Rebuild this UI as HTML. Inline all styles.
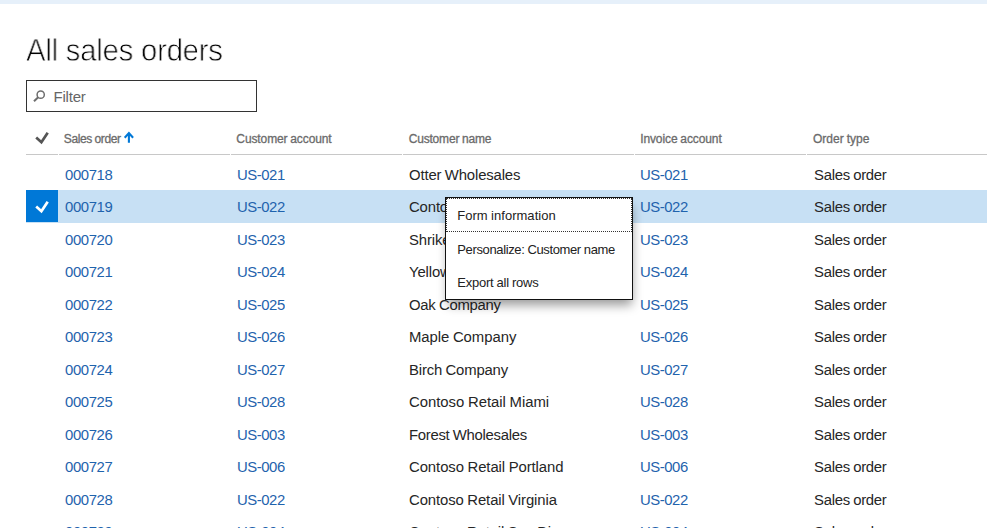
<!DOCTYPE html>
<html lang="en">
<head>
<meta charset="utf-8">
<title>All sales orders</title>
<style>
html,body{margin:0;padding:0;}
body{width:987px;height:528px;overflow:hidden;background:#fff;position:relative;
 font-family:"Liberation Sans",sans-serif;color:#222;}
span{position:absolute;white-space:nowrap;}
.topbar{position:absolute;left:0;top:0;width:987px;height:4px;background:#e6f0fa;}
.title{top:32px;will-change:transform;font-size:31px;line-height:38px;color:#000;transform:scaleX(.95);transform-origin:0 50%;-webkit-text-stroke:.8px #fff;}
.filter{position:absolute;left:26px;top:80px;width:229px;height:30px;border:1px solid #333;background:#fff;}
.ftxt{top:88px;font-size:15px;line-height:18px;color:#666;}
.hdr{word-spacing:-.4px;top:130.6px;font-size:12px;line-height:16px;color:#6b6b6b;-webkit-text-stroke:.3px #6b6b6b;}
.hline{position:absolute;top:154px;height:1px;background:#c8c8c8;}
.selrow{position:absolute;left:26px;top:190px;width:961px;height:33px;background:#c7e0f4;}
.chk{position:absolute;left:26px;top:190px;width:32px;height:32px;background:#0078d7;}
.cell{word-spacing:-.5px;font-size:15.5px;line-height:18px;color:#262626;transform:scaleX(.96);transform-origin:0 0;}
.cell.lnk{color:#1f63ad;}
.menubox{position:absolute;left:445px;top:197px;width:186px;height:101px;border:1px solid #111;background:#fff;box-shadow:1px 7px 10px -2px rgba(0,0,0,.4);}
.focus{position:absolute;left:446px;top:198px;width:186px;height:34px;border:1px dotted #333;box-sizing:border-box;}
.mi{word-spacing:-.3px;font-size:13px;line-height:16px;color:#222;}
svg{position:absolute;}
</style>
</head>
<body>
<div class="topbar"></div>
<div class="filter"></div>
<svg style="left:32px;top:89px" width="14" height="14" viewBox="0 0 14 14"><circle cx="8.7" cy="5.7" r="3.6" fill="none" stroke="#6e6e6e" stroke-width="1.5"/><path d="M6.2 8.2 L2 12.2" stroke="#6e6e6e" stroke-width="2" fill="none"/></svg>
<svg style="left:35px;top:131px" width="14" height="14" viewBox="0 0 14 14"><path d="M1.2 6.6 L6.4 11.3 L12.7 1.7" fill="none" stroke="#555" stroke-width="2.7"/></svg>
<svg style="left:123px;top:130px" width="12" height="14" viewBox="0 0 12 14"><path d="M5.9 12.8 V3 M1.7 7.7 L5.9 3.1 L10.1 7.7" fill="none" stroke="#0078d7" stroke-width="2.1"/></svg>
<div class="hline" style="left:26px;width:32px"></div>
<div class="hline" style="left:59px;width:171px"></div>
<div class="hline" style="left:231px;width:171px"></div>
<div class="hline" style="left:403px;width:231px"></div>
<div class="hline" style="left:635px;width:171px"></div>
<div class="hline" style="left:807px;width:180px"></div>
<div class="selrow"></div>
<div class="chk"><svg style="left:9px;top:10px" width="14" height="14" viewBox="0 0 14 14"><path d="M1.2 6.6 L6.4 11.3 L12.7 1.7" fill="none" stroke="#fff" stroke-width="2.7"/></svg></div>
<span id="t" class="title" style="left:25.77px;letter-spacing:-0.308px;">All sales orders</span>
<span id="f" class="ftxt" style="left:53.48px;letter-spacing:-0.204px;">Filter</span>
<span id="h1" class="hdr" style="left:63.80px;letter-spacing:-0.367px;">Sales order</span>
<span id="h2" class="hdr" style="left:236.33px;letter-spacing:-0.110px;">Customer account</span>
<span id="h3" class="hdr" style="left:408.66px;letter-spacing:-0.180px;">Customer name</span>
<span id="h4" class="hdr" style="left:640.16px;letter-spacing:-0.100px;">Invoice account</span>
<span id="h5" class="hdr" style="left:812.89px;letter-spacing:0.030px;">Order type</span>
<span id="r0a" class="cell lnk" style="left:65.36px;top:166px;letter-spacing:-0.404px;">000718</span>
<span id="r0b" class="cell lnk" style="left:236.93px;top:166px;letter-spacing:-0.472px;">US-021</span>
<span id="r0c" class="cell" style="left:408.83px;top:166px;letter-spacing:-0.155px;">Otter Wholesales</span>
<span id="r0d" class="cell lnk" style="left:640.10px;top:166px;letter-spacing:-0.472px;">US-021</span>
<span id="r0e" class="cell" style="left:813.73px;top:166px;letter-spacing:-0.299px;">Sales order</span>
<span id="r1a" class="cell lnk" style="left:65.36px;top:198px;letter-spacing:-0.404px;">000719</span>
<span id="r1b" class="cell lnk" style="left:236.93px;top:198px;letter-spacing:-0.472px;">US-022</span>
<span id="r1c" class="cell" style="left:409.48px;top:198px;letter-spacing:-0.145px;">Contoso Retail</span>
<span id="r1d" class="cell lnk" style="left:640.10px;top:198px;letter-spacing:-0.472px;">US-022</span>
<span id="r1e" class="cell" style="left:813.73px;top:198px;letter-spacing:-0.299px;">Sales order</span>
<span id="r2a" class="cell lnk" style="left:65.36px;top:231px;letter-spacing:-0.404px;">000720</span>
<span id="r2b" class="cell lnk" style="left:236.93px;top:231px;letter-spacing:-0.472px;">US-023</span>
<span id="r2c" class="cell" style="left:408.82px;top:231px;letter-spacing:-0.145px;">Shrike Retail</span>
<span id="r2d" class="cell lnk" style="left:640.10px;top:231px;letter-spacing:-0.472px;">US-023</span>
<span id="r2e" class="cell" style="left:813.73px;top:231px;letter-spacing:-0.299px;">Sales order</span>
<span id="r3a" class="cell lnk" style="left:65.36px;top:263px;letter-spacing:-0.404px;">000721</span>
<span id="r3b" class="cell lnk" style="left:236.93px;top:263px;letter-spacing:-0.472px;">US-024</span>
<span id="r3c" class="cell" style="left:408.97px;top:263px;letter-spacing:-0.145px;">Yellow Square</span>
<span id="r3d" class="cell lnk" style="left:640.10px;top:263px;letter-spacing:-0.472px;">US-024</span>
<span id="r3e" class="cell" style="left:813.73px;top:263px;letter-spacing:-0.299px;">Sales order</span>
<span id="r4a" class="cell lnk" style="left:65.36px;top:296px;letter-spacing:-0.404px;">000722</span>
<span id="r4b" class="cell lnk" style="left:236.93px;top:296px;letter-spacing:-0.472px;">US-025</span>
<span id="r4c" class="cell" style="left:408.83px;top:296px;letter-spacing:-0.272px;">Oak Company</span>
<span id="r4d" class="cell lnk" style="left:640.10px;top:296px;letter-spacing:-0.472px;">US-025</span>
<span id="r4e" class="cell" style="left:813.73px;top:296px;letter-spacing:-0.299px;">Sales order</span>
<span id="r5a" class="cell lnk" style="left:65.36px;top:328px;letter-spacing:-0.404px;">000723</span>
<span id="r5b" class="cell lnk" style="left:236.93px;top:328px;letter-spacing:-0.472px;">US-026</span>
<span id="r5c" class="cell" style="left:408.85px;top:328px;letter-spacing:-0.046px;">Maple Company</span>
<span id="r5d" class="cell lnk" style="left:640.10px;top:328px;letter-spacing:-0.472px;">US-026</span>
<span id="r5e" class="cell" style="left:813.73px;top:328px;letter-spacing:-0.299px;">Sales order</span>
<span id="r6a" class="cell lnk" style="left:65.36px;top:361px;letter-spacing:-0.404px;">000724</span>
<span id="r6b" class="cell lnk" style="left:236.93px;top:361px;letter-spacing:-0.472px;">US-027</span>
<span id="r6c" class="cell" style="left:408.85px;top:361px;letter-spacing:-0.184px;">Birch Company</span>
<span id="r6d" class="cell lnk" style="left:640.10px;top:361px;letter-spacing:-0.472px;">US-027</span>
<span id="r6e" class="cell" style="left:813.73px;top:361px;letter-spacing:-0.299px;">Sales order</span>
<span id="r7a" class="cell lnk" style="left:65.36px;top:393px;letter-spacing:-0.404px;">000725</span>
<span id="r7b" class="cell lnk" style="left:236.93px;top:393px;letter-spacing:-0.472px;">US-028</span>
<span id="r7c" class="cell" style="left:409.42px;top:393px;letter-spacing:-0.019px;">Contoso Retail Miami</span>
<span id="r7d" class="cell lnk" style="left:640.10px;top:393px;letter-spacing:-0.472px;">US-028</span>
<span id="r7e" class="cell" style="left:813.73px;top:393px;letter-spacing:-0.299px;">Sales order</span>
<span id="r8a" class="cell lnk" style="left:65.36px;top:426px;letter-spacing:-0.404px;">000726</span>
<span id="r8b" class="cell lnk" style="left:236.93px;top:426px;letter-spacing:-0.472px;">US-003</span>
<span id="r8c" class="cell" style="left:408.85px;top:426px;letter-spacing:-0.304px;">Forest Wholesales</span>
<span id="r8d" class="cell lnk" style="left:640.10px;top:426px;letter-spacing:-0.472px;">US-003</span>
<span id="r8e" class="cell" style="left:813.73px;top:426px;letter-spacing:-0.299px;">Sales order</span>
<span id="r9a" class="cell lnk" style="left:65.36px;top:458px;letter-spacing:-0.404px;">000727</span>
<span id="r9b" class="cell lnk" style="left:236.93px;top:458px;letter-spacing:-0.472px;">US-006</span>
<span id="r9c" class="cell" style="left:409.42px;top:458px;letter-spacing:-0.079px;">Contoso Retail Portland</span>
<span id="r9d" class="cell lnk" style="left:640.10px;top:458px;letter-spacing:-0.472px;">US-006</span>
<span id="r9e" class="cell" style="left:813.73px;top:458px;letter-spacing:-0.299px;">Sales order</span>
<span id="r10a" class="cell lnk" style="left:65.36px;top:491px;letter-spacing:-0.404px;">000728</span>
<span id="r10b" class="cell lnk" style="left:236.93px;top:491px;letter-spacing:-0.472px;">US-022</span>
<span id="r10c" class="cell" style="left:409.42px;top:491px;letter-spacing:-0.103px;">Contoso Retail Virginia</span>
<span id="r10d" class="cell lnk" style="left:640.10px;top:491px;letter-spacing:-0.472px;">US-022</span>
<span id="r10e" class="cell" style="left:813.73px;top:491px;letter-spacing:-0.299px;">Sales order</span>
<span id="r11a" class="cell lnk" style="left:65.36px;top:523px;letter-spacing:-0.404px;">000729</span>
<span id="r11b" class="cell lnk" style="left:236.93px;top:523px;letter-spacing:-0.472px;">US-004</span>
<span id="r11c" class="cell" style="left:409.42px;top:523px;letter-spacing:-0.145px;">Contoso Retail San Diego</span>
<span id="r11d" class="cell lnk" style="left:640.10px;top:523px;letter-spacing:-0.472px;">US-004</span>
<span id="r11e" class="cell" style="left:813.73px;top:523px;letter-spacing:-0.299px;">Sales order</span>
<div class="menubox"></div>
<div class="focus"></div>
<span id="m1" class="mi" style="left:457.29px;top:208px;letter-spacing:0.030px;">Form information</span>
<span id="m2" class="mi" style="left:457.29px;top:242px;letter-spacing:-0.365px;">Personalize: Customer name</span>
<span id="m3" class="mi" style="left:457.29px;top:275px;letter-spacing:-0.234px;">Export all rows</span>
</body>
</html>
